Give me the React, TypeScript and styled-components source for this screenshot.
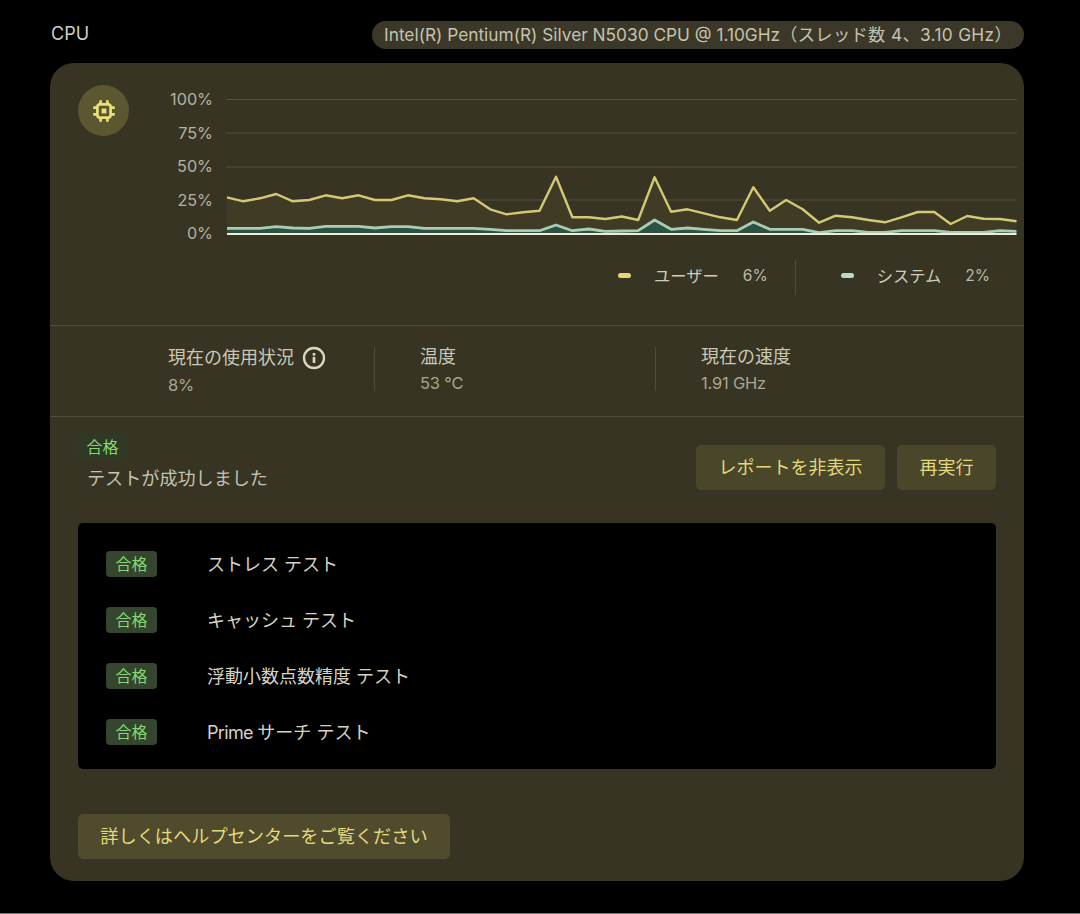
import React from 'react';
import styled, { createGlobalStyle } from 'styled-components';

const Global = createGlobalStyle`
  html, body { margin: 0; padding: 0; background: #000; }
  body { font-family: Inter, "Noto Sans CJK JP", sans-serif; }
`;

const JP = `Inter, "Noto Sans CJK JP", sans-serif`;

const Page = styled.div`
  width: 1080px;
  height: 914px;
  box-sizing: border-box;
  padding: 21px 56px 0 50px;
  background: #000;
  border-bottom: 1px solid #777;
  overflow: hidden;
`;
const Header = styled.header`
  display: flex;
  align-items: center;
  justify-content: space-between;
  height: 28px;
  margin-bottom: 14px;
`;
const Title = styled.h2`
  margin: 0 0 2px 1px;
  font: 400 18px/24px ${JP};
  color: #d0cec2;
`;
const ModelChip = styled.div`
  height: 28px;
  padding: 0 12px;
  display: flex;
  align-items: center;
  border-radius: 14px;
  background: #3b3829;
  font: 400 17.3px/28px ${JP};
  color: #c5c2ae;
  white-space: nowrap;
`;
const ThreadInfo = styled.span`
  letter-spacing: 0.32px;
`;
const Card = styled.section`
  height: 818px;
  box-sizing: border-box;
  border-radius: 24px;
  background: #373423;
`;
const ChartSection = styled.div`
  box-sizing: content-box;
  padding: 20px 7px 0 28px;
  height: 242px;
  border-bottom: 1px solid #504c3b;
`;
const ChartRow = styled.div`
  display: flex;
  align-items: flex-start;
`;
const Bubble = styled.div`
  width: 51px;
  height: 51px;
  margin-top: 2px;
  flex: none;
  border-radius: 50%;
  background: #5b5731;
  display: flex;
  align-items: center;
  justify-content: center;
  color: #ebdf78;
`;
const Axis = styled.div`
  width: 84px;
  flex: none;
  margin-right: 13px;
`;
const AxisLabel = styled.div`
  height: 33.6px;
  font: 400 16.2px/33.6px ${JP};
  color: #b5b2a0;
  text-align: right;
`;
const Legend = styled.div`
  display: flex;
  align-items: center;
  justify-content: flex-end;
  height: 35px;
  margin: 9px 27px 0 0;
`;
const LegendItem = styled.div`
  display: flex;
  align-items: center;
  padding-bottom: 4px;
`;
const Swatch = styled.span<{ $c: string }>`
  width: 13px;
  height: 5px;
  border-radius: 3px;
  background: ${p => p.$c};
  margin-right: 23px;
`;
const LegendLabel = styled.span`
  font: 400 16.3px/24px ${JP};
  color: #cfccba;
  margin-right: 24px;
`;
const LegendValue = styled.span`
  font: 400 15.5px/24px ${JP};
  color: #bdbaa8;
`;
const LegendDivider = styled.div`
  width: 1px;
  height: 35px;
  background: #504c3b;
  margin: 0 45px 0 27px;
`;
const Stats = styled.div`
  display: flex;
  align-items: flex-start;
  height: 70px;
  padding: 20px 0 0 118px;
  border-bottom: 1px solid #504c3b;
`;
const Stat = styled.div<{ $w: number; $ml?: number }>`
  width: ${p => p.$w}px;
  margin-left: ${p => p.$ml ?? 0}px;
  flex: none;
`;
const StatLabel = styled.div`
  display: flex;
  align-items: center;
  gap: 8px;
  font: 400 18px/22px ${JP};
  color: #cbc8b5;
`;
const StatValue = styled.div`
  margin-top: 5px;
  font: 400 16.5px/21px ${JP};
  letter-spacing: -0.2px;
  color: #a9a694;
`;
const StatDivider = styled.div`
  width: 1px;
  height: 44px;
  margin-top: 1px;
  flex: none;
  background: #504c3b;
`;
const Result = styled.div`
  display: flex;
  justify-content: space-between;
  height: 106px;
  padding: 0 28px;
`;
const ResultText = styled.div`
  padding-top: 17px;
`;
const Tag = styled.span<{ $strong?: boolean }>`
  display: inline-block;
  width: ${p => (p.$strong ? 51 : 49)}px;
  height: 26px;
  box-sizing: border-box;
  text-align: center;
  border-radius: 4px;
  background: ${p => (p.$strong ? '#35452e' : '#2f3a26')};
  font: 400 16px/27px ${JP};
  color: #84d871;
`;
const ResultMessage = styled.div`
  margin: 5px 0 0 9px;
  font: 400 18.1px/26px ${JP};
  color: #c5c2b0;
`;
const Actions = styled.div`
  display: flex;
  gap: 12px;
  padding-top: 28px;
`;
const Button = styled.button`
  height: 45px;
  padding: 0 22.5px;
  border: 0;
  border-radius: 5px;
  background: #4a4629;
  font: 400 18px/45px ${JP};
  color: #e2d87c;
  white-space: nowrap;
`;
const Panel = styled.div`
  margin: 0 28px;
  height: 246px;
  box-sizing: border-box;
  padding: 13px 0 9px 28px;
  border-radius: 5px;
  background: #000;
`;
const Row = styled.div`
  display: flex;
  align-items: center;
  gap: 50px;
  height: 56px;
`;
const RowText = styled.span`
  padding-top: 2px;
  font: 400 18px/26px ${JP};
  color: #d6d3c4;
`;
const LatinName = styled.span`
  letter-spacing: -0.65px;
`;
const HelpButton = styled(Button)`
  display: block;
  width: 372px;
  padding: 0;
  margin: 45px 0 0 28px;
  background: #4f4b2c;
  font-size: 18.2px;
`;

const user = [197.3,201.3,198.3,194,201.3,200,195.3,198.3,195.3,200,200,195.3,198.3,199.3,201.3,198.3,209.3,214.3,212.3,210.7,176.7,217.3,217.3,219,216.5,220,177.3,211.7,209.3,213.3,217.3,220,187.3,210.7,200,209.3,222.7,215.7,217.3,220,222.3,217.3,212,212,224,216,218.7,219,221.3];
const sys = [228.3,228.3,228.3,226.7,228,228.3,226.3,226.3,226.3,228,226.7,226.7,228.3,228.3,228.3,228.3,229.3,230.7,230.7,230.7,225,230.7,229,231.3,231,230.7,220,229.3,228,229.3,230.7,230.7,222,229.3,229.3,229.3,232.7,230.7,230.7,232.3,232.3,230.7,230.7,230.7,232.3,232.3,232.3,230.7,231.3];
const X0 = 227;
const DX = (1016.5 - 227) / 48;
const toLine = (a: number[]) => a.map((y, i) => `${(X0 + i * DX).toFixed(1)},${y}`).join(' ');
const toArea = (a: number[]) => `${X0},234 ${toLine(a)} 1016.5,234`;

const Chart = () => (
  <svg width={791} height={168} viewBox="226 83 791 168" style={{ display: 'block' }}>
    {[99.5, 133, 167, 200].map(y => (
      <line key={y} x1={226} x2={1017} y1={y} y2={y} stroke="#55523f" strokeWidth={1} />
    ))}
    <polygon points={toArea(user)} fill="#3f3b25" />
    <polygon points={toArea(sys)} fill="#2d5243" />
    <polyline points={toLine(user)} fill="none" stroke="#d3c975" strokeWidth={2.4} strokeLinejoin="round" />
    <polyline points={toLine(sys)} fill="none" stroke="#a9ccb4" strokeWidth={2.8} strokeLinejoin="round" />
    <line x1={227} x2={1016.5} y1={234} y2={234} stroke="#f0ecd8" strokeWidth={1.8} />
  </svg>
);

const ChipIcon = () => (
  <svg width={24} height={24} viewBox="0 0 24 24" fill="none" stroke="currentColor">
    <rect x={5.4} y={5.4} width={13.2} height={13.2} rx={2.6} strokeWidth={2.7} />
    <rect x={9.6} y={9.6} width={4.8} height={4.8} fill="currentColor" stroke="none" />
    <path d="M8.6 1.2v4M15.4 1.2v4M8.6 18.8v4M15.4 18.8v4M1.2 8.6h4M1.2 15.4h4M18.8 8.6h4M18.8 15.4h4" strokeWidth={2.7} />
  </svg>
);

const InfoIcon = () => (
  <svg width={24} height={24} viewBox="0 0 24 24" fill="none">
    <circle cx={12} cy={12} r={10} stroke="#dcd8c0" strokeWidth={2.3} />
    <rect x={10.7} y={10.8} width={2.6} height={6.2} fill="#dcd8c0" />
    <rect x={10.7} y={7} width={2.6} height={2.6} fill="#dcd8c0" />
  </svg>
);

export default function App() {
  return (
    <Page>
      <Global />
      <Header>
        <Title>CPU</Title>
        <ModelChip>
          <span>Intel(R) Pentium(R) Silver N5030 CPU @ 1.10GHz<ThreadInfo>（スレッド数 4、3.10 GHz）</ThreadInfo></span>
        </ModelChip>
      </Header>
      <Card>
        <ChartSection>
          <ChartRow>
            <Bubble><ChipIcon /></Bubble>
            <Axis>
              {['100%', '75%', '50%', '25%', '0%'].map(t => <AxisLabel key={t}>{t}</AxisLabel>)}
            </Axis>
            <Chart />
          </ChartRow>
          <Legend>
            <LegendItem>
              <Swatch $c="#e3d877" />
              <LegendLabel>ユーザー</LegendLabel>
              <LegendValue>6%</LegendValue>
            </LegendItem>
            <LegendDivider />
            <LegendItem>
              <Swatch $c="#b3dccb" />
              <LegendLabel>システム</LegendLabel>
              <LegendValue>2%</LegendValue>
            </LegendItem>
          </Legend>
        </ChartSection>
        <Stats>
          <Stat $w={206}>
            <StatLabel>現在の使用状況<InfoIcon /></StatLabel>
            <StatValue>8%</StatValue>
          </Stat>
          <StatDivider />
          <Stat $w={235} $ml={45}>
            <StatLabel>温度</StatLabel>
            <StatValue>53 °C</StatValue>
          </Stat>
          <StatDivider />
          <Stat $w={200} $ml={45}>
            <StatLabel>現在の速度</StatLabel>
            <StatValue>1.91 GHz</StatValue>
          </Stat>
        </Stats>
        <Result>
          <ResultText>
            <Tag>合格</Tag>
            <ResultMessage>テストが成功しました</ResultMessage>
          </ResultText>
          <Actions>
            <Button>レポートを非表示</Button>
            <Button>再実行</Button>
          </Actions>
        </Result>
        <Panel>
          <Row><Tag $strong>合格</Tag><RowText>ストレス テスト</RowText></Row>
          <Row><Tag $strong>合格</Tag><RowText>キャッシュ テスト</RowText></Row>
          <Row><Tag $strong>合格</Tag><RowText>浮動小数点数精度 テスト</RowText></Row>
          <Row><Tag $strong>合格</Tag><RowText><LatinName>Prime </LatinName>サーチ テスト</RowText></Row>
        </Panel>
        <HelpButton>詳しくはヘルプセンターをご覧ください</HelpButton>
      </Card>
    </Page>
  );
}
